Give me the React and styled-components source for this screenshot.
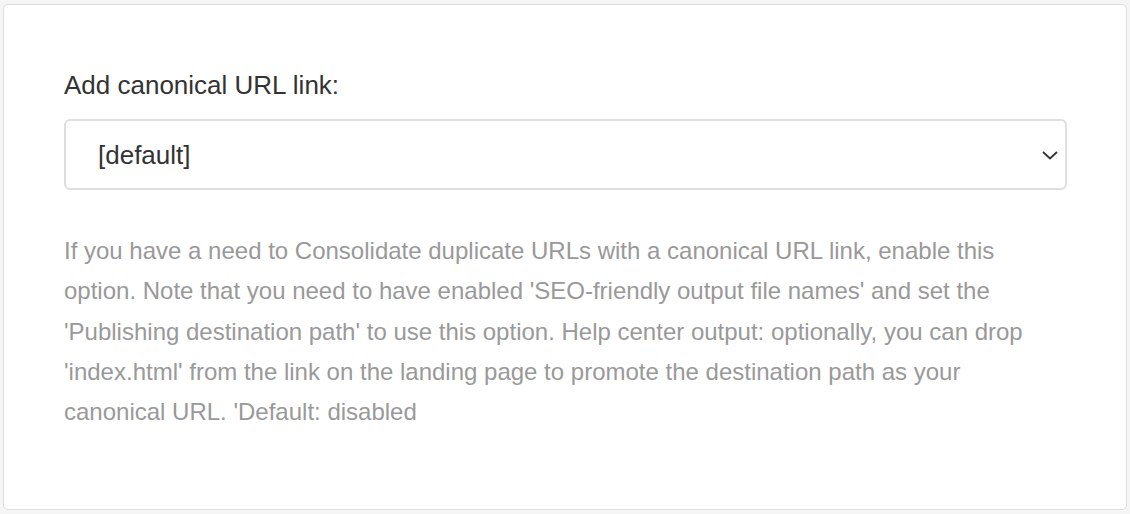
import React from "react";
import styled, { createGlobalStyle } from "styled-components";

const GlobalStyle = createGlobalStyle`
  html, body {
    margin: 0;
    padding: 0;
    background: #f5f5f5;
  }
  body {
    font-family: "Liberation Sans", Arial, Helvetica, sans-serif;
  }
`;

const Page = styled.div`
  padding: 4px 3px;
  height: 514px;
  box-sizing: border-box;
`;

const Panel = styled.div`
  height: 506px;
  box-sizing: border-box;
  background: #fff;
  border: 1.5px solid #dedede;
  border-radius: 5px;
  padding: 64px 60px 0 60px;
`;

const Label = styled.label`
  display: block;
  font-size: 26px;
  line-height: 33px;
  color: #333;
  margin-bottom: 17px;
`;

const SelectWrap = styled.div`
  position: relative;
  width: 1003px;
`;

const Select = styled.select`
  appearance: none;
  -webkit-appearance: none;
  width: 100%;
  height: 71px;
  box-sizing: border-box;
  border: 2px solid #dfdfdf;
  border-radius: 6px;
  background: #fff;
  padding: 0 60px 0 32px;
  font-family: inherit;
  font-size: 26px;
  color: #333;
  outline: none;
`;

const Chevron = styled.svg`
  position: absolute;
  right: 8px;
  top: 50%;
  transform: translateY(-50%);
  pointer-events: none;
`;

const Help = styled.p`
  margin: 41px 0 0 0;
  font-size: 24px;
  line-height: 40.3px;
  color: #999;
  max-width: 1000px;
`;

export default function App() {
  return (
    <>
      <GlobalStyle />
      <Page>
        <Panel>
          <Label htmlFor="canonical">Add canonical URL link:</Label>
          <SelectWrap>
            <Select id="canonical" defaultValue="default">
              <option value="default">[default]</option>
              <option value="enabled">enabled</option>
              <option value="disabled">disabled</option>
            </Select>
            <Chevron width="18" height="12" viewBox="0 0 18 12">
              <path d="M2 3 L9 9.5 L16 3" fill="none" stroke="#333" strokeWidth="1.8" />
            </Chevron>
          </SelectWrap>
          <Help>
            If you have a need to Consolidate duplicate URLs with a canonical URL link, enable this
            option. Note that you need to have enabled 'SEO-friendly output file names' and set the
            'Publishing destination path' to use this option. Help center output: optionally, you can
            drop 'index.html' from the link on the landing page to promote the destination path as
            your canonical URL. 'Default: disabled
          </Help>
        </Panel>
      </Page>
    </>
  );
}
